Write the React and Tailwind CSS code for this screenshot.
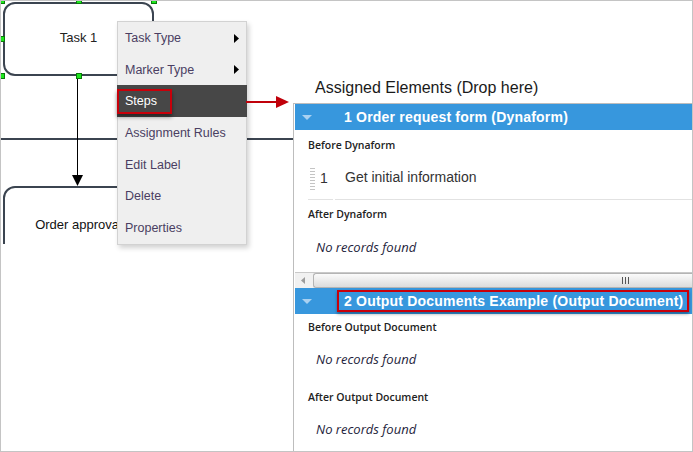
export default function App() {
  const menu = ["Task Type", "Marker Type", "Steps", "Assignment Rules", "Edit Label", "Delete", "Properties"];
  const handles = [
    [2, 1], [79, 1], [154, 1], [2, 39], [2, 76], [79, 76],
  ];
  const Tri = () => (
    <svg width="10" height="5" viewBox="0 0 10 5" className="shrink-0">
      <polygon points="0,0 10,0 5,5" fill="#a9d1f1" />
    </svg>
  );
  const label = "font-['Open_Sans',sans-serif] font-semibold text-[10.5px] text-[#222] pl-[13px] pt-[2px] flex items-center";
  const nrf = "font-['Open_Sans',sans-serif] italic text-[13px] text-[#1e1e3c] pl-[21px] pt-[2px] flex items-center";
  return (
    <div className="relative w-[693px] h-[452px] overflow-hidden bg-white flex font-['Liberation_Sans',Arial,sans-serif]">
      {/* Left: diagram canvas */}
      <div className="relative w-[293px] shrink-0 h-full">
        <div className="relative h-[244px] overflow-hidden">
          <div className="absolute left-0 top-[138px] w-[293px] h-[2px] bg-[#3b4450]" />
          <div className="absolute left-[3px] top-[2px] w-[151px] h-[74px] border-2 border-[#3b4450] rounded-[12px] bg-white flex items-center justify-center pb-[3px] text-[13px] text-[#222]">
            Task 1
          </div>
          {handles.map(([x, y], i) => (
            <div
              key={i}
              className="absolute w-[6px] h-[6px] bg-[#1ee61e] border border-[#0a7a0a]"
              style={{ left: x - 3, top: y - 3 }}
            />
          ))}
          <svg className="absolute left-[70px] top-[76px]" width="16" height="112" viewBox="0 0 16 112">
            <line x1="7.5" y1="3" x2="7.5" y2="100" stroke="#000" strokeWidth="1" />
            <polygon points="2,99 13,99 7.5,110" fill="#000" />
          </svg>
          <div className="absolute left-[3px] top-[186px] w-[151px] h-[90px] border-2 border-[#3b4450] rounded-[12px] bg-white flex justify-center pt-[27px] text-[13px] text-[#111]">
            Order approval
          </div>
        </div>
      </div>

      {/* Right: assigned elements */}
      <div className="flex-1 min-w-0 flex flex-col">
        <div className="h-[103px] flex items-end pl-[22px] pb-[6px] text-[16px] leading-[18px] text-[#1a1a1a]">
          Assigned Elements (Drop here)
        </div>
        <div className="flex-1 border-l border-t border-[#bdbdbd] pl-[1px] flex flex-col">
          <div className="h-[26px] bg-[#3797dd] flex items-center">
            <div className="ml-[7px]"><Tri /></div>
            <span className="ml-[32px] text-[14px] tracking-[0.2px] font-bold text-white whitespace-nowrap">1 Order request form (Dynaform)</span>
          </div>
          <div className={`${label} h-[30px]`}>Before Dynaform</div>
          <div className="h-[40px] flex">
            <div className="ml-[13px] w-[25px] border-b border-[#e2e2e2] flex items-center pb-[2px]">
              <div className="ml-[2px] w-[5px] h-[24px] bg-[radial-gradient(circle,#c4c4c4_0.9px,transparent_1px)] bg-[length:2.5px_3px]" />
              <span className="ml-[5px] text-[14px] text-[#333]">1</span>
            </div>
            <div className="ml-[2px] flex-1 border-b border-[#e2e2e2] flex items-center pl-[10px] pb-[4px] text-[14px] text-[#333]">
              Get initial information
            </div>
          </div>
          <div className={`${label} h-[28px]`}>After Dynaform</div>
          <div className={`${nrf} h-[38px]`}>No records found</div>
          <div className="h-[6px]" />
          <div className="h-[16px] border-t border-[#c9c9c9] bg-[#f1f1f1] flex">
            <div className="w-[18px] flex items-center justify-center pr-[2px]">
              <svg width="4" height="7" viewBox="0 0 4 7">
                <polygon points="4,0 4,7 0,3.5" fill="#9c9c9c" />
              </svg>
            </div>
            <div className="flex-1 border border-r-0 border-[#b4b4b4] rounded-l-[3px] bg-gradient-to-b from-[#fbfbfb] to-[#dcdcdc] flex items-center pl-[308px] gap-[2px]">
              <div className="w-[1px] h-[7px] bg-[#555]" />
              <div className="w-[1px] h-[7px] bg-[#555]" />
              <div className="w-[1px] h-[7px] bg-[#555]" />
            </div>
          </div>
          <div className="h-[26px] bg-[#3797dd] flex items-center">
            <div className="ml-[7px]"><Tri /></div>
            <div className="ml-[25px] mr-[4px] flex-1 h-[22px] border-2 border-[#c8000a] shadow-[0_2px_3px_rgba(0,0,0,0.35)] flex items-center pl-[5px]">
              <span className="text-[14px] tracking-[0.2px] font-bold text-white whitespace-nowrap">2 Output Documents Example (Output Document)</span>
            </div>
          </div>
          <div className={`${label} h-[26px]`}>Before Output Document</div>
          <div className={`${nrf} h-[38px]`}>No records found</div>
          <div className={`${label} h-[38px]`}>After Output Document</div>
          <div className={`${nrf} h-[26px]`}>No records found</div>
        </div>
      </div>

      {/* Context menu */}
      <div className="absolute left-[117px] top-[21px] w-[130px] h-[224px] bg-[#efefef] border border-[#d2d2d2] shadow-[2px_3px_5px_rgba(0,0,0,0.18)] z-10 text-[12.5px]">
        {menu.map((m) =>
          m === "Steps" ? (
            <div key={m} className="h-[31.67px] -mx-[1px] bg-[#474747] flex items-center">
              <span className="w-[55px] h-[25px] mt-[1px] border-2 border-[#c8000a] shadow-[0_3px_4px_rgba(0,0,0,0.45)] flex items-center pl-[6px] text-white">
                Steps
              </span>
            </div>
          ) : (
            <div key={m} className="h-[31.67px] flex items-center justify-between pl-[7px] pr-[7px] pt-[1px] text-[#4a3e62]">
              <span>{m}</span>
              {(m === "Task Type" || m === "Marker Type") && (
                <svg width="5" height="9" viewBox="0 0 5 9">
                  <polygon points="0,0 5,4.5 0,9" fill="#000" />
                </svg>
              )}
            </div>
          )
        )}
      </div>

      {/* Red arrow */}
      <svg className="absolute left-[246px] top-[94px] z-10" width="44" height="16" viewBox="0 0 44 16">
        <line x1="0" y1="8" x2="32" y2="8" stroke="#c0000a" strokeWidth="2" />
        <polygon points="30,2 43,8 30,14" fill="#c0000a" />
      </svg>

      {/* Outer frame */}
      <div className="absolute inset-0 border border-[#c4c4c4] pointer-events-none z-20" />
    </div>
  );
}
